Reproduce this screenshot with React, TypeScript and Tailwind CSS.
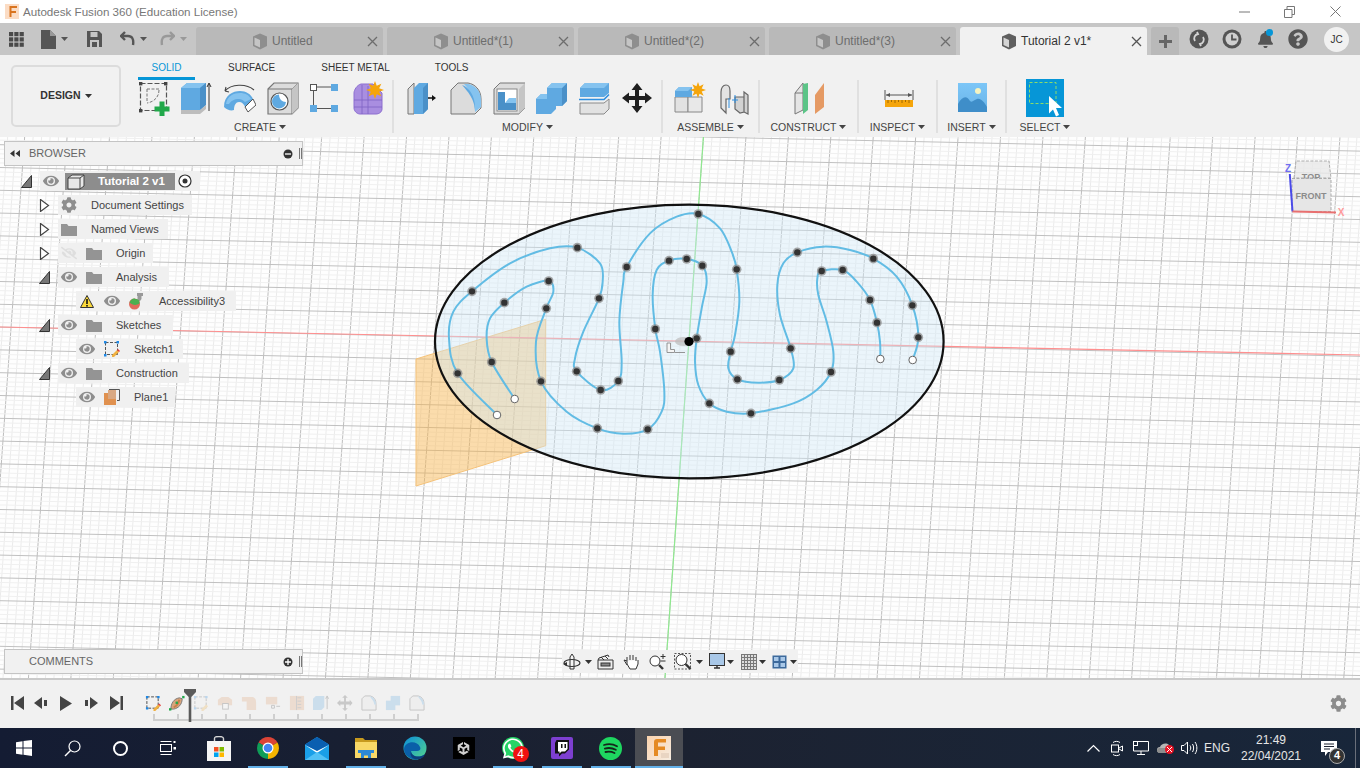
import React from "react";
import { FaEye, FaEyeSlash, FaCog, FaBell, FaQuestionCircle, FaWhatsapp } from "react-icons/fa";
import { SiUnity } from "react-icons/si";

type P = [number, number, number?];
const O = 1, W = 2;
const outer: P[] = [[261,660,W],[143,535,O],[117,430],[130,350],[186,289,O],[300,205],[420,160],[502,158,O],[570,205],[578,260],[567,310,O],[520,410],[495,490],[500,529,O],[572,585,O],[625,558,O],[635,500],[628,380],[640,260],[650,216,O],[720,115],[800,65],[865,57,O],[930,100],[965,170],[980,223,O],[988,320],[975,420],[962,470,O],[955,520],[982,553,O],[1045,563],[1108,555,O],[1150,520],[1142,460,O],[1110,360],[1102,270],[1120,205],[1162,172,O],[1240,155],[1320,165],[1390,191,O],[1460,245],[1507,331,O],[1525,427,O],[1508,495,W]];
const inner: P[] = [[314,612,W],[245,501,O],[230,430],[240,370],[283,323,O],[350,275],[416,258,O],[430,290],[409,340,O],[378,440],[393,559,O],[470,650],[562,700,O],[640,716],[713,703,O],[755,650],[763,590],[750,470],[736,402,O],[728,300],[740,225],[777,197,O],[830,192,O],[877,212,O],[890,260],[875,340],[860,430,O],[855,500],[865,570],[898,625,O],[950,650],[1023,655,O],[1150,625],[1220,585],[1263,531,O],[1270,470],[1250,380],[1225,300],[1222,250],[1235,228,O],[1298,225,O],[1340,260],[1380,315,O],[1401,383,O],[1410,440],[1411,492,W]];
const px = (x: number) => 410 + x / 3;
const py = (y: number) => 195 + y / 3;
function spline(pts: P[]) {
  const q = pts.map((p) => [px(p[0]), py(p[1])]);
  let d = `M${q[0][0]} ${q[0][1]}`;
  for (let i = 0; i < q.length - 1; i++) {
    const a = q[i - 1] || q[i], b = q[i], c = q[i + 1], e = q[i + 2] || c;
    d += `C${b[0] + (c[0] - a[0]) / 6} ${b[1] + (c[1] - a[1]) / 6} ${c[0] - (e[0] - b[0]) / 6} ${c[1] - (e[1] - b[1]) / 6} ${c[0]} ${c[1]}`;
  }
  return d;
}
const range = (a: number, b: number) => Array.from({ length: b - a + 1 }, (_, i) => a + i);

function Grid() {
  const sx = 42.43 / 5, sy = 22.8 / 5, tilt = 0.0714, slope = 0.0215;
  return (
    <g>
      {range(-15, 175).map((k) => {
        const x = 48.3 + k * sx;
        return <line key={"v" + k} x1={x + 263 * tilt} y1={137} x2={x - 280 * tilt} y2={680} stroke={k % 5 === 0 ? "#bdbdbd" : "#ebebeb"} strokeWidth="1" />;
      })}
      {range(-75, 60).map((k) => {
        const y = 418.3 + k * sy;
        return <line key={"h" + k} x1={0} y1={y} x2={1360} y2={y + 1360 * slope} stroke={k % 5 === 0 ? "#c0c0c0" : "#f0f0f0"} strokeWidth="1" />;
      })}
    </g>
  );
}

function Scene() {
  const dots = (pts: P[]) =>
    pts.filter((p) => p[2]).map((p, i) =>
      p[2] === O ? (
        <g key={i}><circle cx={px(p[0])} cy={py(p[1])} r="4.8" fill="#8a8a8a" opacity="0.75" /><circle cx={px(p[0])} cy={py(p[1])} r="3.2" fill="#333" /></g>
      ) : (
        <circle key={i} cx={px(p[0])} cy={py(p[1])} r="3.8" fill="#fff" stroke="#666" strokeWidth="1" />
      ));
  return (
    <svg className="absolute inset-0" width="1360" height="541" viewBox="0 137 1360 541">
      <rect x="0" y="137" width="1360" height="541" fill="#fefefe" />
      <Grid />
      <polygon points="416,359 545.7,319.3 545.7,445.7 416,486" fill="#f9b44a" fillOpacity="0.45" stroke="#f4c27a" strokeWidth="1" />
      <line x1="0" y1="327" x2="1360" y2="355" stroke="#ff8f8f" strokeWidth="1.2" />
      <line x1="703.4" y1="137" x2="665" y2="678" stroke="#8fe88f" strokeWidth="1.2" />
      <ellipse cx="689.3" cy="341.5" rx="254.3" ry="136.8" fill="#cfe8f8" fillOpacity="0.4" stroke="#111" strokeWidth="2.2" />
      <path d={spline(outer)} fill="none" stroke="#62bce4" strokeWidth="2" />
      <path d={spline(inner)} fill="none" stroke="#62bce4" strokeWidth="2" />
      {dots(outer)}
      {dots(inner)}
      <ellipse cx="684" cy="341.5" rx="9" ry="4.5" fill="#bbb" opacity="0.7" />
      <path d="M667 343h3.5v6.5h4v3h-7.5zM675 352.5h10" fill="#f5f5f5" stroke="#8a8a8a" strokeWidth="0.9" />
      <circle cx="689" cy="341.5" r="4.6" fill="#000" />
      {/* view cube */}
      <path d="M1294 178l2-17h33l2 17z" fill="#e8e8e8" fillOpacity="0.8" stroke="#a5a5a5" strokeDasharray="3 1.5" strokeWidth="0.9" />
      <text x="1311" y="180" textAnchor="middle" fontSize="9" fontWeight="700" fill="#8c8c8c">TOP</text>
      <rect x="1292" y="178.5" width="39" height="33" fill="#e6e6e6" stroke="#a5a5a5" strokeDasharray="3 1.5" strokeWidth="0.9" />
      <text x="1311" y="199" textAnchor="middle" fontSize="9" fontWeight="700" fill="#8c8c8c">FRONT</text>
      <line x1="1289.8" y1="174" x2="1292.5" y2="211.5" stroke="#4a4ae8" strokeWidth="2" />
      <line x1="1292.5" y1="211.5" x2="1336" y2="212.5" stroke="#e87070" strokeWidth="2" />
      <text x="1288" y="172" textAnchor="middle" fontSize="10" fontWeight="700" fill="#6f6ff0">Z</text>
      <text x="1341" y="216" textAnchor="middle" fontSize="10" fontWeight="700" fill="#ff9a9a">X</text>
    </svg>
  );
}

const Caret = ({ c = "#444", className = "" }: { c?: string; className?: string }) => (
  <svg width="7" height="4" viewBox="0 0 7 4" className={className}><path d="M0 0h7L3.5 4z" fill={c} /></svg>
);

const Star = ({ x, y, r = 7 }: { x: number; y: number; r?: number }) => {
  const pts = range(0, 15).map((i) => {
    const a = (i * Math.PI) / 8, R = i % 2 ? r * 0.5 : r;
    return `${x + R * Math.cos(a)},${y + R * Math.sin(a)}`;
  }).join(" ");
  return <polygon points={pts} fill="#f5a50b" />;
};

const Ic = ({ children, w = 32, h = 36, className = "" }: { children: React.ReactNode; w?: number; h?: number; className?: string }) => (
  <svg width={w} height={h} viewBox={`0 0 ${w} ${h}`} className={className}>{children}</svg>
);

const Bl = "#5fa9e1", BlL = "#85c3ef", BlD = "#4a90c8", Gy = "#dcdcdc", GyD = "#777";

const SketchIc = () => (
  <Ic>
    <rect x="2.5" y="3.5" width="26" height="27" fill="none" stroke="#555" strokeWidth="1.2" strokeDasharray="5 2" />
    {[[1, 2], [26, 2], [1, 29]].map(([x, y], i) => <rect key={i} x={x} y={y} width="3.4" height="3.4" fill="#444" />)}
    <path d="M9 9h12v1M9 9v13M21 10C21 17 16 22 9 23" fill="none" stroke="#777" strokeWidth="1" strokeDasharray="3 1.5" />
    <path d="M21.5 21.5h5v5h5v5h-5v5h-5v-5h-5v-5h5z" fill="#21a84a" />
  </Ic>
);
const Extrude = () => (
  <Ic>
    <path d="M0 8L6 3h19v22l-6 5H0z" fill={Bl} />
    <path d="M0 8L6 3h19l-6 5z" fill={BlL} />
    <path d="M19 8l6-5v22l-6 5z" fill={BlD} />
    <path d="M0 30h19l6-5v4l-6 5H0z" fill="#bdbdbd" />
    <path d="M28 31V4M26 7l2-4 2 4" stroke="#333" fill="none" strokeWidth="1" />
  </Ic>
);
const Revolve = () => (
  <Ic>
    <path d="M1 11C7 4 22 3 30 10M1 11l1-4M1 11l4 1" fill="none" stroke="#444" strokeWidth="1.1" />
    <path d="M0 27C0 15 9 11 16 11c6 0 11 3 13 8l-8 8c-1-3-3-5-6-5-3 0-5 3-5 8-3 1-7 0-10-3z" fill={Bl} />
    <path d="M2 24C3 16 10 13 16 13c5 0 9 2 11 6l-6 3c-2-2-4-3-6-3-5 0-8 2-10 5z" fill={BlL} />
    <path d="M29 19l3 6-8 7-3-5z" fill="#fff" stroke="#555" strokeWidth="1" />
  </Ic>
);
const Hole = () => (
  <Ic>
    <path d="M1 9l6-6h24v25l-6 6H1z" fill={Gy} stroke={GyD} strokeWidth="1.2" />
    <path d="M1 9h24v25M25 9l6-6" fill="none" stroke={GyD} strokeWidth="1" />
    <path d="M25 9l6-6v25l-6 6z" fill="#c5c5c5" />
    <circle cx="12.5" cy="21.5" r="8.5" fill="#fff" stroke="#555" strokeWidth="1.2" />
    <path d="M12 14.5a7 7 0 1 0 7 7.5c-4 0-7-3-7-7.500z" fill={Bl} />
  </Ic>
);
const Pattern = () => (
  <Ic>
    <path d="M7 7h14M3.5 11v14M7 28.500h14" stroke="#555" strokeWidth="1" fill="none" />
    <rect x="0.500" y="4.500" width="6" height="6" fill="#fff" stroke="#555" />
    <rect x="21" y="4" width="7" height="7" fill={Bl} />
    <rect x="0" y="25" width="7" height="7" fill={Bl} />
    <rect x="21" y="25" width="7" height="7" fill={Bl} />
  </Ic>
);
const Form = () => (
  <Ic>
    <path d="M1 13c0-3 3-8 7-9h12l9 9v16c0 3-3 5-6 5H7c-3 0-6-3-6-6z" fill="#a98ee0" stroke="#8d6fd0" strokeWidth="1" />
    <path d="M1 20h28M15 6v28M9 5v29M1 27h28" stroke="#7f62c4" strokeWidth="0.8" fill="none" />
    <Star x={22} y={10} r={9} />
  </Ic>
);
const PressPull = () => (
  <Ic>
    <path d="M1 9l6-6v31H1z" fill={Gy} stroke={GyD} />
    <path d="M7 8l5-5h9v26l-5 5H7z" fill={Bl} />
    <path d="M16 8l5-5v26l-5 5z" fill={BlD} />
    <path d="M21 18h5" stroke="#111" strokeWidth="1.5" /><path d="M25 15l4 3-4 3z" fill="#111" />
  </Ic>
);
const Fillet = () => (
  <Ic>
    <path d="M1 10l7-7h10c7 1 13 7 13 16v9l-6 6H1z" fill={Gy} stroke={GyD} />
    <path d="M14 4h4c7 1 13 7 13 16v7l-6 5c0-11-4-21-11-28z" fill={BlL} />
    <path d="M12 5c7 2 13 11 13 22v3c-1-12-7-18-13-25z" fill={Bl} />
  </Ic>
);
const Shell = () => (
  <Ic>
    <path d="M1 9l6-6h25v25l-6 6H1z" fill={Gy} stroke={GyD} />
    <path d="M26 9l6-6v25l-6 6z" fill="#c5c5c5" />
    <rect x="4" y="9" width="20" height="22" fill="#fff" stroke="#888" />
    <path d="M5 12h7v11h11v7H5z" fill={BlD} />
    <path d="M12 23l4-5h7v5z" fill={BlL} />
  </Ic>
);
const Combine = () => (
  <Ic>
    <path d="M11 8l5-5h15v18l-5 5H11z" fill={Bl} /><path d="M26 8l5-5v18l-5 5z" fill={BlD} /><path d="M11 8l5-5h15l-5 5z" fill={BlL} />
    <path d="M0 19l5-5h15v15l-5 5H0z" fill={Bl} /><path d="M0 19l5-5h6v5z" fill={BlL} />
  </Ic>
);
const Split = () => (
  <Ic>
    <path d="M1 8l5-5h24v10l-5 4H1z" fill={Bl} /><path d="M1 8l5-5h24l-5 5z" fill={BlL} />
    <path d="M0 19.500h25l5-5" fill="none" stroke="#2f8fe0" strokeWidth="1.6" />
    <path d="M1 23h24l5-4v10l-5 5H1z" fill="#e2e2e2" stroke="#8a8a8a" />
  </Ic>
);
const Move = () => (
  <Ic>
    <path d="M15 3l5.500 7h-3.500v6h6v-3.500l7 5.500-7 5.500V20h-6v6h3.500L15 33l-5.500-7H13v-6H7v3.500L0 18l7-5.500V16h6v-6H9.500z" fill="#1f1f1f" />
  </Ic>
);
const NewComp = () => (
  <Ic>
    <path d="M1 17h13v15H1z" fill="#e2e2e2" stroke="#888" /><path d="M14 17h14v15H14z" fill="#e8e8e8" stroke="#888" />
    <path d="M1 11l4-4h13v10H1z" fill={Bl} /><path d="M1 11l4-4h13l-4 4z" fill={BlL} />
    <Star x={24} y={10} r={8} />
  </Ic>
);
const Joint = () => (
  <Ic>
    <path d="M4 12c0-4 2-7 5-7s4 3 4 6v8h-4v14l-5-5z" fill="#e3e3e3" stroke="#666" strokeWidth="1.2" />
    <path d="M27 12l4 3v19l-4-2zM18 17h9v15l-4 1-5-4z" fill="#d2d2d2" stroke="#666" strokeWidth="1.2" />
    <path d="M12 18v10" stroke="#2f8fe0" /><path d="M18 15v8M15 20h6" stroke="#2f8fe0" />
  </Ic>
);
const Construct = () => (
  <Ic>
    <path d="M2 13l8-10v27l-8 4z" fill="#e5e5e5" stroke="#777" />
    <path d="M2 13h8" stroke="#777" />
    <path d="M10 4l5-1v27l-5 4z" fill="#5cc487" />
    <path d="M22 15l9-12v24l-9 7z" fill="#e59a64" />
  </Ic>
);
const Inspect = () => (
  <Ic>
    <path d="M1 10v10M29 10v10" stroke="#555" />
    <path d="M2 15h26" stroke="#555" /><path d="M2 15l4-2v4zM28 15l-4-2v4z" fill="#555" />
    <rect x="1" y="20" width="28" height="7" fill="#f5a50b" />
    <path d="M4 20v3M7.500 20v2M11 20v3M14.500 20v2M18 20v3M21.500 20v2M25 20v3" stroke="#8a5a00" strokeWidth="0.8" />
  </Ic>
);
const Insert = () => (
  <Ic>
    <defs><linearGradient id="ins" x1="0" x2="0" y1="0" y2="1"><stop offset="0" stopColor="#7cc6f7" /><stop offset="1" stopColor="#6ab4e8" /></linearGradient></defs>
    <rect x="1" y="3" width="29" height="29" fill="url(#ins)" />
    <circle cx="21" cy="11" r="3" fill="#f5f3c0" />
    <path d="M1 24c4-8 9-9 12-3 2 2 4-1 7-2 4-1 7 3 10 8v5H1z" fill="#3f8ec9" />
  </Ic>
);
const Select = () => (
  <Ic w={38} h={38} className="-mt-[1px]">
    <rect width="38" height="38" fill="#0696d7" />
    <rect x="3.500" y="3.500" width="26.500" height="21" fill="none" stroke="#8cdc6a" strokeWidth="1" strokeDasharray="3 2" />
    <path d="M23 17l13 12h-6l3 7-3 1.500-3-7-4 4z" fill="#fff" />
  </Ic>
);

function Group({ label, w, shift = "", children }: { label: string; w: string; shift?: string; children: React.ReactNode }) {
  return (
    <div className={`flex flex-col items-center h-[53px] border-r-2 border-[#e0e0e0] ${w}`}>
      <div className={`flex gap-[11px] h-[38px] items-start ${shift}`}>{children}</div>
      <div className="mt-[3px] flex items-center gap-[3px] text-[10.500px] leading-[12px] text-[#444]">{label}<Caret /></div>
    </div>
  );
}

function CubeIc({ dark }: { dark?: boolean }) {
  return (
    <svg width="16" height="17" viewBox="0 0 16 17">
      <path d="M1 3.500l7-3 7 3v9.500l-7 3.500-7-3.500z" fill={dark ? "#5f5f5f" : "#8e8e8e"} />
      <path d="M2.500 4.500L8 7v7.500l-5.500-2.500z" fill={dark ? "#d5d5d5" : "#c5c5c5"} />
    </svg>
  );
}
const XIc = ({ c = "#666" }: { c?: string }) => (
  <svg width="11" height="11" viewBox="0 0 11 11"><path d="M1 1l9 9M10 1l-9 9" stroke={c} strokeWidth="1.300" /></svg>
);

function DocTab({ name, active, pl }: { name: string; active?: boolean; pl: string }) {
  return (
    <div className={`flex items-center w-[187px] h-[28px] rounded-t-[3px] ${pl} ${active ? "bg-[#f1f1f1] text-[#333]" : "bg-[#b9b9b9] text-[#6d6d6d]"}`}>
      <CubeIc dark={active} />
      <span className="ml-[4px] text-[12px]">{name}</span>
      <span className="ml-auto mr-[5px]"><XIc c={active ? "#555" : "#6d6d6d"} /></span>
    </div>
  );
}

function TitleBar() {
  return (
    <div className="h-[23px] bg-white flex items-center shrink-0">
      <div className="ml-[5px] w-[14px] h-[15px] bg-[#fbdcc4] flex items-center justify-center">
        <svg width="9" height="11" viewBox="0 0 9 11"><path d="M1.500 0H9v2H3.500v3H8v2H3.500v4h-2z" fill="#d9741f" /></svg>
      </div>
      <span className="ml-[4px] text-[11.600px] text-[#777]">Autodesk Fusion 360 (Education License)</span>
      <div className="ml-auto flex items-center">
        <svg width="11" height="2" viewBox="0 0 11 2" className="mr-[34px]"><path d="M0 1h11" stroke="#777" /></svg>
        <svg width="11" height="12" viewBox="0 0 11 12" className="mr-[35px]"><path d="M.500 3.500h7.500v8H.500zM3 3.500V.500h7.500v8H8" fill="none" stroke="#777" /></svg>
        <svg width="11" height="11" viewBox="0 0 11 11" className="mr-[19px]"><path d="M.500.500l10 10M10.500.500l-10 10" stroke="#777" /></svg>
      </div>
    </div>
  );
}

function TabBar() {
  return (
    <div className="h-[32px] bg-[#c6c6c6] flex items-end shrink-0">
      <div className="w-[196px] h-[32px] flex items-center shrink-0">
        <svg width="15" height="15" viewBox="0 0 15 15" className="ml-[9px]" fill="#4a4a4a">
          {[0, 5.300, 10.600].flatMap((x) => [0, 5.300, 10.600].map((y) => <rect key={`${x}-${y}`} x={x} y={y} width="4.200" height="4.200" />))}
        </svg>
        <svg width="15" height="19" viewBox="0 0 15 19" className="ml-[17px]"><path d="M0 0h9l6 6v13H0z" fill="#555" /><path d="M9 0v6h6" fill="#999" /></svg>
        <Caret c="#555" className="ml-[5px]" />
        <svg width="15" height="16" viewBox="0 0 15 16" className="ml-[19px]"><path d="M0 0h12l3 3v13H0z" fill="#555" /><rect x="3.500" y="1" width="7" height="5" fill="#c6c6c6" /><rect x="3" y="9" width="9" height="7" fill="#c6c6c6" /><rect x="5" y="11" width="5" height="5" fill="#555" /></svg>
        <svg width="15" height="16" viewBox="0 0 15 16" className="ml-[18px]"><path d="M5 1L1 5l4 4M1 5h7c4 0 6 3 5 9" fill="none" stroke="#555" strokeWidth="2.400" /></svg>
        <Caret c="#555" className="ml-[5px]" />
        <svg width="15" height="16" viewBox="0 0 15 16" className="ml-[13px]"><path d="M10 1l4 4-4 4M14 5H7c-4 0-6 3-5 9" fill="none" stroke="#999" strokeWidth="2.400" /></svg>
        <Caret c="#999" className="ml-[5px]" />
      </div>
      <div className="flex gap-[4px]">
        <DocTab name="Untitled" pl="pl-[56px]" />
        <DocTab name="Untitled*(1)" pl="pl-[46px]" />
        <DocTab name="Untitled*(2)" pl="pl-[46px]" />
        <DocTab name="Untitled*(3)" pl="pl-[46px]" />
        <DocTab name="Tutorial 2 v1*" active pl="pl-[41px]" />
      </div>
      <div className="ml-[4px] w-[28px] h-[28px] rounded-t-[3px] bg-[#b9b9b9] flex items-center justify-center">
        <svg width="13" height="13" viewBox="0 0 13 13"><path d="M6.500 0v13M0 6.500h13" stroke="#666" strokeWidth="3" /></svg>
      </div>
      <div className="h-[32px] flex items-center ml-[10px] gap-[13px]">
        <svg width="20" height="20" viewBox="0 0 20 20"><circle cx="10" cy="10" r="9.500" fill="#555" /><path d="M6 12a4.500 4.500 0 0 1 3-7l-1-2M14 8a4.500 4.500 0 0 1-3 7l1 2" fill="none" stroke="#d5d5d5" strokeWidth="1.800" /></svg>
        <svg width="20" height="20" viewBox="0 0 20 20"><circle cx="10" cy="10" r="9.500" fill="#555" /><circle cx="10" cy="10" r="6.500" fill="#d0d0d0" /><path d="M10 5.500V10.500h4.500" fill="none" stroke="#555" strokeWidth="1.800" /></svg>
        <span className="relative w-[20px] h-[20px] flex items-center justify-center"><FaBell size={17} color="#555" /><span className="absolute top-[0px] right-[2px] w-[7px] h-[7px] rounded-full bg-[#0696d7]" /></span>
        <FaQuestionCircle size={20} color="#555" />
      </div>
      <div className="h-[32px] flex items-center ml-[16px]">
        <div className="w-[25px] h-[25px] rounded-full bg-[#f1f1f1] flex items-center justify-center text-[10px] text-[#333]">JC</div>
      </div>
    </div>
  );
}

function Toolbar() {
  return (
    <div className="h-[82px] bg-[#f1f1f1] flex shrink-0">
      <div className="ml-[11px] mt-[10px] w-[110px] h-[62px] rounded-[5px] border-2 border-[#dcdcdc] flex items-center justify-center gap-[4px] text-[10.500px] font-bold text-[#333]">
        DESIGN <Caret c="#333" />
      </div>
      <div className="flex flex-col">
        <div className="h-[25px] flex ml-[17px] text-[10px] text-[#333]">
          <div className="w-[57px] h-[25px] pt-[5px] text-center border-b-[3px] border-[#0696d7] text-[#0696d7]">SOLID</div>
          <div className="pt-[5px] ml-[33px]">SURFACE</div>
          <div className="pt-[5px] ml-[46px]">SHEET METAL</div>
          <div className="pt-[5px] ml-[45px]">TOOLS</div>
        </div>
        <div className="flex ml-[7px]">
          <Group label="CREATE" w="w-[266px]" shift="ml-[3px]"><SketchIc /><Extrude /><Revolve /><Hole /><Pattern /><Form /></Group>
          <Group label="MODIFY" w="w-[269px]" shift="ml-[6px]"><PressPull /><Fillet /><Shell /><Combine /><Split /><Move /></Group>
          <Group label="ASSEMBLE" w="w-[97px]" shift="ml-[2px]"><NewComp /><Joint /></Group>
          <Group label="CONSTRUCT" w="w-[99px]"><Construct /></Group>
          <Group label="INSPECT" w="w-[79px]" shift="ml-[5px]"><Inspect /></Group>
          <Group label="INSERT" w="w-[69px]" shift="ml-[2px]"><Insert /></Group>
          <div className="w-[76px] flex flex-col items-center h-[53px]">
            <div className="h-[38px]"><Select /></div>
            <div className="mt-[3px] flex items-center gap-[3px] text-[10.500px] leading-[12px] text-[#444]">SELECT<Caret /></div>
          </div>
        </div>
      </div>
    </div>
  );
}

const Eye = () => <FaEye size={16} color="#8e8e8e" />;
const Folder = () => (
  <svg width="16" height="13" viewBox="0 0 16 13" className="shrink-0"><path d="M0 1h6l1.500 2H16v10H0z" fill="#949494" /></svg>
);
const Arrow = ({ open }: { open?: boolean }) => open ? (
  <svg width="11" height="13" viewBox="0 0 11 13" className="shrink-0"><path d="M.500 12.500L10.500.500v12z" fill="#777" stroke="#333" /></svg>
) : (
  <svg width="11" height="13" viewBox="0 0 11 13" className="shrink-0"><path d="M1.500.500l8 6-8 6z" fill="#fff" stroke="#444" strokeWidth="1.200" /></svg>
);

function Row({ open, w, children }: { open?: boolean; w: string; children: React.ReactNode }) {
  return (
    <div className="flex items-center h-[20px]">
      <span className="ml-[19px] mr-[8px] w-[11px] flex"><Arrow open={open} /></span>
      <div className={`flex items-center h-[20px] bg-[#f0f0f0] pl-[3px] text-[11px] text-[#444] ${w}`}>{children}</div>
    </div>
  );
}
function Sub({ w, children }: { w: string; children: React.ReactNode }) {
  return (
    <div className="flex items-center h-[20px] ml-[56px]">
      <div className={`flex items-center h-[20px] bg-[#f0f0f0] text-[11px] text-[#444] ${w}`}>{children}</div>
    </div>
  );
}

function Tree() {
  return (
    <div className="absolute left-[20px] top-[34px] flex flex-col gap-[4px]">
      <div className="flex items-center h-[20px]">
        <span className="ml-[1px] mr-[8px] w-[11px] flex"><Arrow open /></span>
        <div className="flex items-center h-[20px] w-[160px] bg-[#f0f0f0] pl-[3px]">
          <Eye />
          <div className="ml-[6px] w-[110px] h-[17px] mt-[1px] bg-[#8d8d8d] flex items-center">
            <svg width="18" height="16" viewBox="0 0 18 16" className="ml-[2px]"><path d="M1 4l4-3h12v11l-4 3H1z" fill="#e8e8e8" stroke="#444" /><path d="M1 4h12v11M13 4l4-3" fill="none" stroke="#444" /></svg>
            <span className="ml-[13px] text-[11.500px] font-bold text-white">Tutorial 2 v1</span>
          </div>
          <svg width="14" height="14" viewBox="0 0 14 14" className="ml-[3px]"><circle cx="7" cy="7" r="6" fill="#fff" stroke="#333" strokeWidth="1.200" /><circle cx="7" cy="7" r="2.500" fill="#333" /></svg>
        </div>
      </div>
      <Row w="w-[134px]"><FaCog size={16} color="#8e8e8e" /><span className="ml-[14px]">Document Settings</span></Row>
      <Row w="w-[110px]"><Folder /><span className="ml-[14px]">Named Views</span></Row>
      <Row w="w-[95px]"><FaEyeSlash size={16} color="#dedede" /><span className="ml-[9px] flex"><Folder /></span><span className="ml-[14px]">Origin</span></Row>
      <Row open w="w-[111px]"><Eye /><span className="ml-[9px] flex"><Folder /></span><span className="ml-[14px]">Analysis</span></Row>
      <Sub w="w-[160px]">
        <svg width="14" height="13" viewBox="0 0 14 13" className="ml-[4px]"><path d="M7 .500L13.500 12.500H.500z" fill="#fcd93a" stroke="#333" /><rect x="6.200" y="4" width="1.600" height="5" fill="#111" /><rect x="6.200" y="10" width="1.600" height="1.600" fill="#111" /></svg>
        <span className="ml-[10px] flex"><Eye /></span>
        <svg width="15" height="17" viewBox="0 0 15 17" className="ml-[8px]"><path d="M9 0h6v3h-1.500v3L12 8H11L9.500 6V3H9z" fill="#999" /><circle cx="6.500" cy="11" r="5.500" fill="#e06a5c" /><path d="M1.500 9.500c1-3 4-5 6-3.500 3 0 4.500 2 4 4.500-3 2-7 2-10-1z" fill="#4caf50" /></svg>
        <span className="ml-[16px]">Accessibility3</span>
      </Sub>
      <Row open w="w-[115px]"><Eye /><span className="ml-[9px] flex"><Folder /></span><span className="ml-[14px]">Sketches</span></Row>
      <Sub w="w-[107px]">
        <span className="ml-[3px] flex"><Eye /></span>
        <svg width="16" height="16" viewBox="0 0 16 16" className="ml-[9px]"><rect x="1.500" y="1.500" width="12" height="12" fill="none" stroke="#555" strokeDasharray="3 1.500" /><rect x="0" y="0" width="2.500" height="2.500" fill="#1e88e5" /><rect x="12.500" y="0" width="2.500" height="2.500" fill="#1e88e5" /><rect x="0" y="13" width="2.500" height="2.500" fill="#1e88e5" /><path d="M8 14l5-5 2 2-5 5H8z" fill="#f0b040" /><path d="M13 9l1-1 2 2-1 1z" fill="#e53935" /></svg>
        <span className="ml-[14px]">Sketch1</span>
      </Sub>
      <Row open w="w-[131px]"><Eye /><span className="ml-[9px] flex"><Folder /></span><span className="ml-[14px]">Construction</span></Row>
      <Sub w="w-[99px]">
        <span className="ml-[3px] flex"><Eye /></span>
        <svg width="16" height="16" viewBox="0 0 16 16" className="ml-[9px]"><path d="M5 .500h10.500v11H13" fill="none" stroke="#555" /><rect x="0" y="4" width="12" height="12" fill="#e0914f" /><rect x="4" y="1" width="8" height="9" fill="#d9a882" /></svg>
        <span className="ml-[14px]">Plane1</span>
      </Sub>
    </div>
  );
}

function Panel({ title, top, minus, back }: { title: string; top: string; minus?: boolean; back?: boolean }) {
  return (
    <div className={`absolute left-[4px] w-[299px] h-[25px] ${top} bg-[#f1f1f1] border border-[#c4c4c4] flex items-center text-[11px] text-[#666]`}>
      {back ? (
        <svg width="10" height="7" viewBox="0 0 10 7" className="ml-[5px]"><path d="M4.500 0v7L0 3.500zM10 0v7L5.500 3.500z" fill="#333" /></svg>
      ) : <span className="ml-[5px] w-[10px]" />}
      <span className="ml-[9px]">{title}</span>
      <svg width="10" height="10" viewBox="0 0 10 10" className="ml-auto mr-[6px]"><circle cx="5" cy="5" r="4.500" fill="#333" /><path d={minus ? "M2 5h6" : "M2 5h6M5 2v6"} stroke="#fff" strokeWidth="1.300" /></svg>
      <span className="w-[3px] h-[11px] border-x border-[#777]" />
    </div>
  );
}

function NavBar() {
  const C = () => <Caret c="#333" />;
  return (
    <div className="absolute left-[562px] top-[513px] w-[236px] h-[23px] bg-[#f1f1f1] flex items-center">
      <svg width="18" height="18" viewBox="0 0 18 18" className="ml-[1px]"><path d="M9 1l2 3v12H7V4z" fill="#f5f5f5" stroke="#333" /><ellipse cx="9" cy="10" rx="8" ry="3.500" fill="none" stroke="#333" strokeWidth="1.200" /><path d="M0 11l4-2v4z" fill="#333" /></svg>
      <span className="ml-[4px] flex"><C /></span>
      <svg width="17" height="16" viewBox="0 0 17 16" className="ml-[5px]"><path d="M1 6h15v9H1zM1 6l1-2 9-3 1 2M4 3l3 3M8 2l3 3" fill="#eee" stroke="#333" /><rect x="4" y="9" width="9" height="3" fill="#888" stroke="#333" /></svg>
      <svg width="17" height="17" viewBox="0 0 17 17" className="ml-[9px]"><path d="M4 8V4M7 7V2M10 7V2M13 8V4M4 8v3l3 5h6l2-5V7M4 8L1 7l3 5" fill="#fff" stroke="#333" /></svg>
      <svg width="17" height="17" viewBox="0 0 17 17" className="ml-[9px]"><circle cx="6" cy="8" r="5" fill="#fff" stroke="#333" /><path d="M10 12l4 4" stroke="#333" strokeWidth="2.400" /><path d="M14 1v5M11.500 3.500h5M11.500 8h5" stroke="#333" /></svg>
      <svg width="18" height="17" viewBox="0 0 18 17" className="ml-[8px]"><rect x=".500" y=".500" width="16" height="15.500" fill="none" stroke="#555" strokeDasharray="2 1.500" /><circle cx="7.500" cy="7" r="5.500" fill="#fff" stroke="#333" /><path d="M11.500 11l5 5" stroke="#333" strokeWidth="2.400" /></svg>
      <span className="ml-[4px] flex"><C /></span>
      <svg width="16" height="17" viewBox="0 0 16 17" className="ml-[6px]"><rect x=".500" y=".500" width="15" height="12" fill="#a9c8e8" stroke="#333" /><path d="M5 15h6M8 13v2" stroke="#333" strokeWidth="1.500" /></svg>
      <span className="ml-[2px] flex"><C /></span>
      <svg width="16" height="16" viewBox="0 0 16 16" className="ml-[7px]" fill="none" stroke="#777">
        <rect x=".500" y=".500" width="15" height="15" fill="#ddd" /><path d="M3.500 0v16M6.500 0v16M9.500 0v16M12.500 0v16M0 3.500h16M0 6.500h16M0 9.500h16M0 12.500h16" />
      </svg>
      <span className="ml-[2px] flex"><C /></span>
      <svg width="15" height="14" viewBox="0 0 15 14" className="ml-[6px]"><rect x=".500" y=".500" width="14" height="13" fill="#3d6a9c" /><rect x="2" y="2" width="4.500" height="4" fill="#a9c8e8" /><rect x="8.500" y="2" width="4.500" height="4" fill="#a9c8e8" /><rect x="2" y="8" width="4.500" height="4" fill="#a9c8e8" /><rect x="8.500" y="8" width="4.500" height="4" fill="#a9c8e8" /></svg>
      <span className="ml-[3px] flex"><C /></span>
    </div>
  );
}

function Canvas() {
  return (
    <div className="relative h-[541px] shrink-0 overflow-hidden">
      <Scene />
      <Panel title="BROWSER" top="top-[4px]" minus back />
      <Tree />
      <Panel title="COMMENTS" top="top-[512px]" />
      <NavBar />
    </div>
  );
}

const TL = ({ children }: { children: React.ReactNode }) => (
  <span className="w-[24px] flex justify-center">{children}</span>
);
const Faded = ({ children }: { children: React.ReactNode }) => (
  <span className="w-[24px] flex justify-center opacity-25">{children}</span>
);
const s = { width: 16, height: 16 };
function Timeline() {
  return (
    <div className="h-[50px] bg-[#f1f1f1] border-t-2 border-[#cacaca] flex shrink-0 relative">
      <div className="ml-[5px] mt-[15px] h-[16px] flex items-center">
        <span className="w-[24px] flex justify-center"><svg width="13" height="14" viewBox="0 0 13 14"><path d="M0 0h2.500v14H0zM13 0v14L3 7z" fill="#444" /></svg></span>
        <span className="w-[24px] flex justify-center"><svg width="14" height="12" viewBox="0 0 14 12"><path d="M8 0v12L0 6zM10 3h3v6h-3z" fill="#444" /></svg></span>
        <span className="w-[26px] flex justify-center"><svg width="12" height="15" viewBox="0 0 12 15"><path d="M0 0l12 7.500L0 15z" fill="#444" /></svg></span>
        <span className="w-[24px] flex justify-center"><svg width="14" height="12" viewBox="0 0 14 12"><path d="M6 0v12l8-6zM1 3h3v6H1z" fill="#444" /></svg></span>
        <span className="w-[26px] flex justify-center"><svg width="13" height="14" viewBox="0 0 13 14"><path d="M10.500 0H13v14h-2.500zM0 0v14l10-7z" fill="#444" /></svg></span>
      </div>
      <div className="ml-[12px] flex flex-col">
        <div className="mt-[13px] h-[19px] flex items-center">
          <TL><svg {...s} viewBox="0 0 17 17"><rect x="2" y="2" width="12" height="12" fill="none" stroke="#444" strokeDasharray="3 1.500" /><path d="M1 1h2.500v2.500H1zM13 1h2.500v2.500H13zM1 13h2.500v2.500H1z" fill="#1e88e5" /><path d="M9 15l5-5 2 2-5 5H9z" fill="#f0b040" /><path d="M14 10l1-1 2 2-1 1z" fill="#e53935" /></svg></TL>
          <TL><svg {...s} viewBox="0 0 17 17"><path d="M2 15C2 9 5 4 11 3l3 1c0 6-4 10-9 11z" fill="#d9a47c" stroke="#777" /><path d="M5 13c3-1 5-4 6-8" fill="none" stroke="#c87f48" strokeWidth="2" /><rect x="7" y="7" width="2.500" height="2.500" fill="#1fa84a" /><rect x="14" y="1" width="2.500" height="2.500" fill="#1fa84a" /><rect x="0" y="14" width="2.500" height="2.500" fill="#1fa84a" /></svg></TL>
          <Faded><svg {...s} viewBox="0 0 17 17"><rect x="2" y="2" width="12" height="12" fill="none" stroke="#444" strokeDasharray="3 1.500" /><path d="M1 1h2.500v2.500H1zM13 1h2.500v2.500H13zM1 13h2.500v2.500H1z" fill="#1e88e5" /><path d="M9 15l5-5 2 2-5 5H9z" fill="#f0b040" /></svg></Faded>
          <Faded><svg {...s} viewBox="0 0 17 17"><path d="M1 5l4-3h7l4 3v6H1z" fill="#e0a070" /><rect x="6" y="9" width="6" height="6" fill="#fff" stroke="#444" /></svg></Faded>
          <Faded><svg {...s} viewBox="0 0 17 17"><path d="M1 2h10c4 0 5 3 5 6v8H6V7H1z" fill="#e0a070" /></svg></Faded>
          <Faded><svg {...s} viewBox="0 0 17 17"><path d="M1 2h12v8H1z" fill="#e0a070" /><path d="M7 11h3v3H7zM12 12h4" stroke="#444" fill="none" /></svg></Faded>
          <Faded><svg {...s} viewBox="0 0 17 17"><rect x="1" y="1" width="15" height="15" fill="#e0a070" /><path d="M9 3h4M9 6.500h4M9 10h4M9 13.500h4M8 1v15" stroke="#666" /></svg></Faded>
          <Faded><svg {...s} viewBox="0 0 17 17"><path d="M0 4l3-3h9v12l-3 3H0z" fill={Bl} /><path d="M15 15V2M13.500 4L15 1l1.500 3" stroke="#444" fill="none" /></svg></Faded>
          <Faded><svg {...s} viewBox="0 0 17 17"><path d="M8.500 0l3 3H9.500v4h4V5l3 3.500-3 3.500v-2h-4v4h2l-3 3-3-3h2V10h-4v2L0 8.500 3.500 5v2h4V3h-2z" fill="#555" /></svg></Faded>
          <Faded><svg {...s} viewBox="0 0 17 17"><path d="M1 4l3-3h6c4 1 6 4 6 9v6H1z" fill="#e8e8e8" stroke="#444" /><path d="M9 1c4 1 7 4 7 9h-2c0-4-3-6-5-9z" fill={Bl} /></svg></Faded>
          <Faded><svg {...s} viewBox="0 0 17 17"><path d="M6 1h10v10H6z" fill={Bl} /><path d="M1 6h10v10H1z" fill={Bl} /></svg></Faded>
          <Faded><svg {...s} viewBox="0 0 17 17"><path d="M1 4l3-3h6c4 1 6 4 6 9v6H1z" fill="#e8e8e8" stroke="#444" /><path d="M9 1c4 1 7 4 7 9h-2c0-4-3-6-5-9z" fill={Bl} /></svg></Faded>
        </div>
        <div className="ml-[12px] mt-[2px] w-[266px] h-[7px] border-b-2 border-[#cfcfcf] flex justify-between">
          {range(0, 11).map((i) => <span key={i} className="w-[2px] h-[5px] bg-[#cfcfcf]" />)}
        </div>
      </div>
      <svg width="12" height="33" viewBox="0 0 12 33" className="absolute left-[184px] top-[9px]"><path d="M0 0h12v3L7.300 8V33H4.700V8L0 3z" fill="#5a5a5a" /></svg>
      <span className="ml-auto mr-[13px] mt-[15px] flex"><FaCog size={17} color="#8c8c8c" /></span>
    </div>
  );
}

function Slot({ w = "w-[49px]", on, active, children }: { w?: string; on?: boolean; active?: boolean; children: React.ReactNode }) {
  return (
    <div className={`relative h-[40px] flex items-center justify-center shrink-0 ${w} ${active ? "bg-[#4b4d53]" : ""}`}>
      {children}
      {on && <span className={`absolute bottom-0 h-[2px] bg-[#62b0e8] ${active ? "w-[48px]" : "w-[40px]"}`} />}
    </div>
  );
}

function Taskbar() {
  return (
    <div className="h-[40px] flex items-center bg-linear-to-r from-[#141c33] via-[#1c2231] to-[#18263a] text-white shrink-0">
      <Slot w="w-[48px]"><svg width="16" height="16" viewBox="0 0 16 16"><path d="M0 2.200l6.500-1V7.500H0zM7.500 1L16 0v7.500H7.500zM0 8.500h6.500v6.300l-6.500-1zM7.500 8.500H16V16l-8.500-1.200z" fill="#fff" /></svg></Slot>
      <Slot w="w-[48px]"><svg width="17" height="17" viewBox="0 0 17 17"><circle cx="10.500" cy="6.500" r="5.500" fill="none" stroke="#fff" strokeWidth="1.200" /><path d="M6.500 10.500L1 16" stroke="#fff" strokeWidth="1.400" /></svg></Slot>
      <Slot w="w-[48px]"><span className="w-[15px] h-[15px] rounded-full border-[2.500px] border-white" /></Slot>
      <Slot w="w-[48px]"><svg width="16" height="16" viewBox="0 0 16 16" fill="none" stroke="#fff"><path d="M.500 1.500h11M.500 14.500h11" /><rect x=".500" y="4.500" width="11" height="7" /><rect x="13.500" y="1" width="2" height="2" fill="#fff" stroke="none" /><rect x="13.500" y="7" width="2.500" height="2.500" fill="#fff" stroke="none" /></svg></Slot>
      <span className="w-[2px] shrink-0" />
      <Slot>
        <svg width="24" height="25" viewBox="0 0 24 25"><path d="M7.500 5V2.500C7.500 1 9 .500 12 .500s4.500.500 4.500 2V5" fill="none" stroke="#d5d5d5" strokeWidth="1.400" /><rect y="5" width="24" height="20" fill="#f5f5f5" /><rect x="7" y="11" width="4.500" height="4.500" fill="#f25022" /><rect x="12.500" y="11" width="4.500" height="4.500" fill="#7fba00" /><rect x="7" y="16.500" width="4.500" height="4.500" fill="#00a4ef" /><rect x="12.500" y="16.500" width="4.500" height="4.500" fill="#ffb900" /></svg>
      </Slot>
      <Slot on>
        <svg width="24" height="24" viewBox="0 0 24 24"><path d="M12 12L2.500 6.500A11 11 0 0 1 21.500 6.500Z" fill="#db4437" /><path d="M12 12L21.500 6.500A11 11 0 0 1 12 23Z" fill="#f4b400" /><path d="M12 12L12 23A11 11 0 0 1 2.500 6.500Z" fill="#0f9d58" /><circle cx="12" cy="12" r="5.500" fill="#fff" /><circle cx="12" cy="12" r="4.300" fill="#4285f4" /></svg>
      </Slot>
      <Slot>
        <svg width="24" height="23" viewBox="0 0 24 23"><path d="M0 7.500L12 0l12 7.500V23H0z" fill="#1a9fe8" /><path d="M0 7.500L12 0l12 7.500-12 7.500z" fill="#0a5fb0" /><path d="M0 8l12 8 12-8L12 14z" fill="#fff" /><path d="M0 23l12-8 12 8z" fill="#52c1f5" /></svg>
      </Slot>
      <Slot on>
        <svg width="22" height="20" viewBox="0 0 22 20"><path d="M0 0h8l2 2h12v3H0z" fill="#c79a1e" /><rect y="4" width="22" height="16" fill="#f8d867" /><path d="M6 20v-5h10v5h-3v-2.500H9V20z" fill="#2d89d6" /><rect x="3" y="12" width="16" height="3" fill="#2d89d6" /></svg>
      </Slot>
      <Slot>
        <svg width="24" height="24" viewBox="0 0 24 24"><defs><linearGradient id="edgeA" x1="0" x2="1" y1="0" y2="1"><stop offset="0" stopColor="#0c8ed9" /><stop offset="1" stopColor="#55d48c" /></linearGradient></defs><circle cx="12" cy="12" r="11.500" fill="url(#edgeA)" /><path d="M1 13C2 5 14 4 17 11c1 2 0 4-3 4H8c0 5 8 8 14 3-3 6-10 7-15 4-4-2-6-5-6-9z" fill="#0a5fa8" /><path d="M8 15c0 5 8 8 14 3-1 3-4 5-7 5-5 1-9-3-7-8z" fill="#0d3f7a" /></svg>
      </Slot>
      <Slot>
        <span className="w-[22px] h-[22px] bg-black flex items-center justify-center"><SiUnity size={13} color="#d0d0d0" /></span>
      </Slot>
      <Slot on>
        <span className="relative w-[24px] h-[24px] flex items-center justify-center">
          <span className="w-[22px] h-[22px] rounded-full bg-[#25d366] flex items-center justify-center"><FaWhatsapp size={23} color="#fff" /></span>
          <span className="absolute left-[12px] top-[10px] w-[16px] h-[16px] rounded-full bg-[#f01010] flex items-center justify-center text-[12px] leading-none text-white">4</span>
        </span>
      </Slot>
      <Slot on>
        <span className="w-[22px] h-[22px] rounded-[2px] bg-[#7d3fd0] flex items-center justify-center">
          <svg width="15" height="17" viewBox="0 0 15 17"><path d="M2.500 0H15v9.500L11 13.500H8L5 16.500V13.500H1V3z" fill="#111" /><path d="M4 2h9.500v7L11 11.500H7.500L5.500 13.500V11.500H4z" fill="#fff" /><rect x="7" y="4" width="1.500" height="4" fill="#111" /><rect x="10.500" y="4" width="1.500" height="4" fill="#111" /></svg>
        </span>
      </Slot>
      <Slot on>
        <svg width="23" height="23" viewBox="0 0 23 23"><circle cx="11.500" cy="11.500" r="11.500" fill="#1ed760" /><path d="M5 8c4-1.200 9-1 13 1.200M5.800 11.600c3.500-1 7.500-.700 11 1.200M6.500 15c3-.700 6-.500 9 1" fill="none" stroke="#14261b" strokeWidth="1.800" strokeLinecap="round" /></svg>
      </Slot>
      <Slot on active w="w-[48px]">
        <svg width="24" height="24" viewBox="0 0 24 24"><defs><linearGradient id="fus" x1="0" x2="1" y1="0" y2="1"><stop offset="0" stopColor="#fbd3ad" /><stop offset="1" stopColor="#f6ece0" /></linearGradient></defs><rect width="24" height="24" fill="url(#fus)" /><path d="M7 20V6c0-2 1-3 3-3h9v3.500h-8v4h7V14h-7v6z" fill="#e58a22" /><rect x="14" y="17" width="8" height="5" fill="#e9d5c2" /></svg>
      </Slot>
      <div className="ml-auto flex items-center h-[40px] text-[12px] text-[#e6e6e6]">
        <span className="w-[24px] flex justify-center"><svg width="13" height="8" viewBox="0 0 13 8"><path d="M.500 7.500l6-6 6 6" fill="none" stroke="#fff" strokeWidth="1.200" /></svg></span>
        <span className="w-[24px] flex justify-center"><svg width="12" height="17" viewBox="0 0 12 17" fill="none" stroke="#fff"><path d="M2 2.500c2-1.500 5-1.500 7 0M2 14.500c2 1.500 5 1.500 7 0" /><rect x=".500" y="5" width="7" height="7" /><path d="M8 8l3.500-2v5L8 9" /></svg></span>
        <span className="w-[24px] flex justify-center"><svg width="16" height="14" viewBox="0 0 16 14" fill="none" stroke="#fff"><path d="M4.500.500H15.500V10H.500V5" /><rect x=".500" y=".500" width="4" height="4" /><path d="M8 10v3M4 13.500h8" /></svg></span>
        <span className="relative w-[24px] flex justify-center"><svg width="16" height="12" viewBox="0 0 16 12"><path d="M3 11a3 3 0 0 1 0-6c1-3 6-5 9-2 2 1 4 4 2 8z" fill="#b5b5b5" /><path d="M0 9a3 3 0 0 1 4-3h5l3 5H2z" fill="#8d8d8d" /></svg><span className="absolute left-[12px] top-[3px] w-[9px] h-[9px] rounded-full bg-[#e81123] flex items-center justify-center"><svg width="5" height="5" viewBox="0 0 5 5"><path d="M0 0l5 5M5 0L0 5" stroke="#fff" /></svg></span></span>
        <span className="w-[24px] flex justify-center"><svg width="17" height="14" viewBox="0 0 17 14" fill="none" stroke="#fff"><path d="M.500 4.500h2.500l3.500-3.500v12L3 9.500H.500z" /><path d="M9 4.500c1 1.500 1 3.500 0 5M11.500 3c1.500 2.500 1.500 5.500 0 8M14 1c2.500 3.500 2.500 8.500 0 12" /></svg></span>
        <span className="w-[32px] text-center">ENG</span>
        <div className="w-[76px] flex flex-col items-center leading-[16px]"><span>21:49</span><span>22/04/2021</span></div>
        <span className="relative w-[40px] flex justify-center"><svg width="16" height="15" viewBox="0 0 16 15"><path d="M0 0h16v11H7l-3 4v-4H0z" fill="#fff" /><path d="M3 3h10M3 5.500h10M3 8h6" stroke="#1c2231" /></svg><span className="absolute left-[20px] top-[7px] w-[16px] h-[16px] rounded-full bg-[#333] border border-[#aaa] flex items-center justify-center text-[11px] font-bold text-white">4</span></span>
        <span className="ml-[6px] mr-[4px] w-[1px] h-[40px] bg-[#6a6f7a]" />
      </div>
    </div>
  );
}

export default function App() {
  return (
    <div className="w-[1360px] h-[768px] overflow-hidden flex flex-col font-['Liberation_Sans',sans-serif]">
      <TitleBar />
      <TabBar />
      <Toolbar />
      <Canvas />
      <Timeline />
      <Taskbar />
    </div>
  );
}
